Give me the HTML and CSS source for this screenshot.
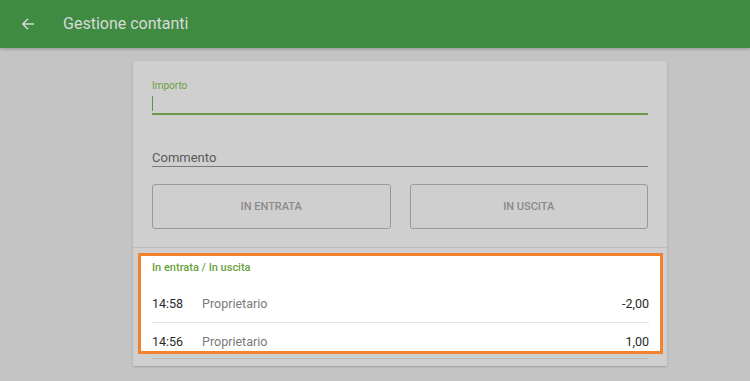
FILE: index.html
```html
<!DOCTYPE html>
<html lang="it">
<head>
    <meta charset="UTF-8">
    <meta name="viewport" content="width=device-width, initial-scale=1.0">
    <title>Gestione contanti</title>
    <link rel="stylesheet" href="styles.css">
</head>
<body>
    <header class="app-bar">
        <svg class="back-icon" width="14" height="14" viewBox="0 0 16 16">
            <path d="M15 8H2M8 2L2 8l6 6" fill="none" stroke="currentColor" stroke-width="1.6"/>
        </svg>
        <span class="app-title">Gestione contanti</span>
    </header>

    <main class="card">
        <div class="form-area">
            <div class="field field-active">
                <label class="field-label">Importo</label>
                <div class="field-input"><span class="cursor"></span></div>
            </div>
            <div class="field field-idle">
                <div class="field-input">Commento</div>
            </div>
            <div class="button-row">
                <button class="outline-btn">IN ENTRATA</button>
                <button class="outline-btn">IN USCITA</button>
            </div>
        </div>

        <section class="history">
            <h2 class="history-title">In entrata / In uscita</h2>
            <div class="history-row">
                <span class="row-time">14:58</span>
                <span class="row-user">Proprietario</span>
                <span class="row-amount">-2,00</span>
            </div>
            <div class="history-row">
                <span class="row-time">14:56</span>
                <span class="row-user">Proprietario</span>
                <span class="row-amount">1,00</span>
            </div>
        </section>
        <div class="tail-line"></div>
    </main>
</body>
</html>
```

FILE: styles.css
```css
body {
    margin: 0;
    font-family: Roboto, "Liberation Sans", sans-serif;
    background-color: #c4c4c4;
    height: 381px;
    overflow: hidden;
}

.app-bar {
    height: 48px;
    background-color: #3e8b41;
    display: flex;
    align-items: center;
    padding-left: 21px;
    box-shadow: 0 1px 3px rgba(0, 0, 0, 0.25);
    color: #d9d9d9;
}

.back-icon {
    margin-right: 28px;
}

.app-title {
    font-size: 16px;
    font-weight: 400;
    margin-top: -2px;
}

.card {
    width: 534px;
    margin: 13px 0 0 133px;
    background-color: #cfcfcf;
    box-shadow: 0 1px 2px rgba(0, 0, 0, 0.2);
    padding-bottom: 7px;
}

.form-area {
    padding: 19px 19px 18px;
    border-bottom: 1px solid #bdbdbd;
}

.field-label {
    display: block;
    font-size: 10px;
    color: #6aa13e;
    height: 12px;
}

.field-input {
    height: 18px;
    font-size: 13px;
    color: #5a5a5a;
    border-bottom: 2px solid #6a9a45;
    display: flex;
    align-items: flex-end;
}

.field-active .field-input {
    margin-top: 1px;
    padding-bottom: 2px;
}

.cursor {
    width: 1px;
    height: 15px;
    background-color: #5f9638;
}

.field-idle {
    margin-top: 34px;
}

.field-idle .field-input {
    border-bottom: 1px solid #7a7a7a;
    height: 17px;
    line-height: 17px;
}

.button-row {
    display: flex;
    gap: 19px;
    margin-top: 17px;
}

.outline-btn {
    flex: 1;
    height: 45px;
    background: transparent;
    border: 1px solid #9a9a9a;
    border-radius: 3px;
    font-family: inherit;
    font-size: 11px;
    font-weight: 500;
    color: #8a8a8a;
}

.history {
    margin: 5px 4px 0 5px;
    border: 3px solid #f3822f;
    background-color: #ffffff;
    padding: 0 11px 0 11px;
    height: 95px;
    overflow: hidden;
}

.history-title {
    margin: 0;
    padding-top: 5px;
    font-size: 11px;
    font-weight: 500;
    color: #6aa13e;
    height: 24px;
}

.history-row {
    display: flex;
    align-items: center;
    height: 37px;
    font-size: 12.5px;
    border-bottom: 1px solid #e3e3e3;
}

.row-time {
    width: 50px;
    color: #2a2a2a;
}

.row-user {
    flex: 1;
    color: #7a7a7a;
}

.row-amount {
    color: #2a2a2a;
}

.tail-line {
    margin: 4px 19px 0;
    border-top: 1px solid #bcbcbc;
}
```
